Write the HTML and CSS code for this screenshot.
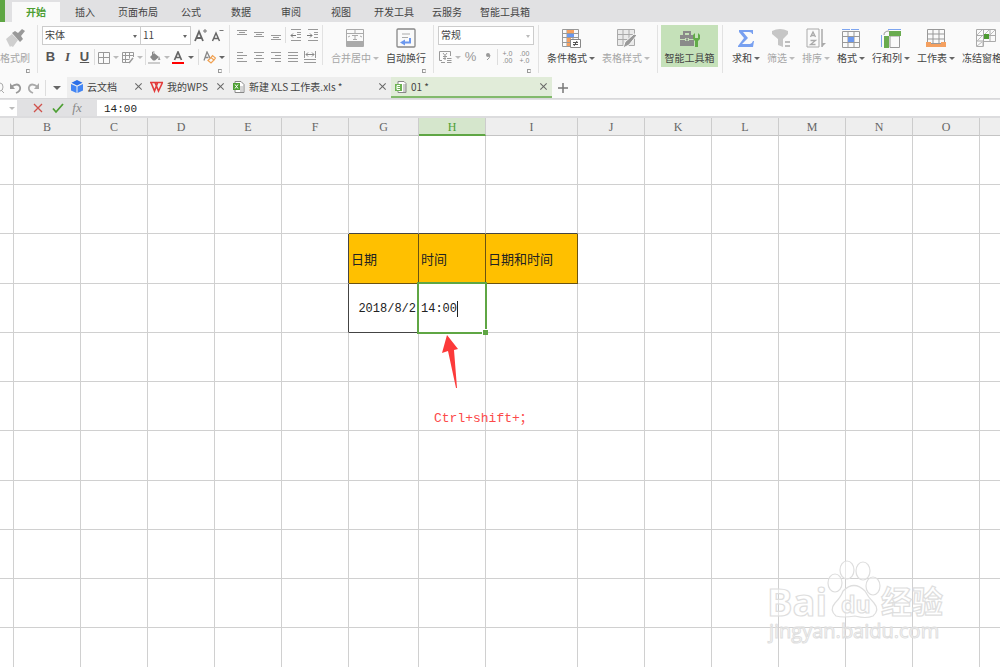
FILE: index.html
```
<!DOCTYPE html>
<html lang="zh-CN">
<head>
<meta charset="utf-8">
<title>01 *</title>
<link rel="stylesheet" href="styles.css">
</head>
<body>
<nav class="menu">
  <button class="app-btn" aria-label="菜单"></button>
  <a class="menu-tab active" href="#">开始</a>
  <a class="menu-tab" href="#">插入</a>
  <a class="menu-tab" href="#">页面布局</a>
  <a class="menu-tab" href="#">公式</a>
  <a class="menu-tab" href="#">数据</a>
  <a class="menu-tab" href="#">审阅</a>
  <a class="menu-tab" href="#">视图</a>
  <a class="menu-tab" href="#">开发工具</a>
  <a class="menu-tab" href="#">云服务</a>
  <a class="menu-tab" href="#">智能工具箱</a>
</nav>

<div class="ribbon">
  <div class="group g-brush">
    <button class="big dim"><svg width="20" height="20" viewBox="0 0 20 20"><path d="M1 11l6-5 6 6-5 7-2-1-1 1z" fill="#cfcfcf"/><path d="M7 5l3-2 3 2 4-4 3 2-4 5 2 3-3 3z" fill="#999"/></svg><span class="lab">格式刷</span></button>
    <i class="launch"></i>
  </div>
  <div class="group g-font">
    <div class="row">
      <label class="drop font-name"><select aria-label="字体"><option>宋体</option></select></label>
      <label class="drop font-size"><select aria-label="字号"><option>11</option></select></label>
      <button class="ib w16 grow-btn" aria-label="增大字号"><svg width="14" height="14" viewBox="0 0 14 14" fill="none" stroke="#666"><path d="M1 13L5 3.500 9 13M2.500 10h5" stroke-width="1.800"/><path d="M9 3h4M11 1v4" stroke="#777"/></svg></button>
      <button class="ib w16" aria-label="减小字号"><svg width="14" height="14" viewBox="0 0 14 14" fill="none" stroke="#666"><path d="M1.500 13L5 5l3.500 8M3 10.500h4" stroke-width="1.500"/><path d="M8.500 2.500h4" stroke="#777"/></svg></button>
    </div>
    <div class="row">
      <button class="ib w16"><b>B</b></button>
      <button class="ib w16"><em>I</em></button>
      <button class="ib w16"><u>U</u></button>
      <i class="sep tight"></i>
      <button class="ib w24 dim" aria-label="边框"><svg width="13" height="13" viewBox="0 0 13 13" fill="none" stroke="#999"><path d="M1.500 1.500h11v11h-11zM6.500 1.500v11M1.500 6.500h11"/></svg><i class="arr"></i></button>
      <button class="ib w24 dim" aria-label="绘图边框"><svg width="13" height="13" viewBox="0 0 13 13" fill="none" stroke="#999"><path d="M8 11.500H1.500v-10h11V6M1.500 4.500h11M1.500 8.500h7M4.500 1.500v10M8.500 1.500v6"/><path d="M8 12l4-5" stroke-width="1.500"/></svg><i class="arr"></i></button>
      <i class="sep tight"></i>
      <button class="ib w24 dim" aria-label="填充颜色"><svg width="13" height="13" viewBox="0 0 13 13"><path d="M2 6l4-4 5 4-4 3.500H5z" fill="#888"/><path d="M4.500 4V1h2" fill="none" stroke="#888"/><path d="M11 5l1.500 4H10z" fill="#999"/><path d="M0 11h12v2H0z" fill="#ccc"/></svg><i class="arr"></i></button>
      <button class="ib w24" aria-label="字体颜色"><svg width="13" height="13" viewBox="0 0 13 13"><path d="M2.500 9L6 1l3.500 8M4 6.500h4" fill="none" stroke="#666" stroke-width="1.700"/><path d="M0 11h12v2H0z" fill="#f00"/></svg><i class="arr"></i></button>
      <i class="sep"></i>
      <button class="ib w24" aria-label="清除"><svg width="13" height="13" viewBox="0 0 13 13" fill="none"><path d="M1 9.500L4 1l3 6M2.500 6.500h3" stroke="#888" stroke-width="1.300"/><path d="M5 9.500l3-3 3 2.500-3 3zM8 6.500l1.500-2 3 2.500L11 9" stroke="#f0a050" stroke-width="1.200"/></svg><i class="arr"></i></button>
    </div>
    <i class="launch"></i>
  </div>
  <div class="group short g-align">
    <div class="row">
      <button class="ib w16" aria-label="顶端对齐"><svg width="12" height="12" viewBox="0 0 12 12" stroke="#999"><path d="M1 1.500h10M3 3.500h6M1 5.500h10"/></svg></button>
      <button class="ib w16" aria-label="垂直居中"><svg width="12" height="12" viewBox="0 0 12 12" stroke="#999"><path d="M1 3.500h10M3 5.500h6M1 7.500h10"/></svg></button>
      <button class="ib w16" aria-label="底端对齐"><svg width="12" height="12" viewBox="0 0 12 12" stroke="#999"><path d="M1 6.500h10M3 8.500h6M1 10.500h10"/></svg></button>
      <i class="sep tight"></i>
      <button class="ib w16" aria-label="减少缩进"><svg width="12" height="12" viewBox="0 0 12 12" stroke="#999" fill="none"><path d="M1 .5h10M7 3.500h4M7 5.500h4M7 8.500h4M1 11.500h10"/><path d="M1 6.500h5M3 4.500l-2 2 2 2" stroke="#777"/></svg></button>
      <button class="ib w16" aria-label="增加缩进"><svg width="12" height="12" viewBox="0 0 12 12" stroke="#999" fill="none"><path d="M1 .5h10M7 3.500h4M7 5.500h4M7 8.500h4M1 11.500h10"/><path d="M0 6.500h5M3 4.500l2 2-2 2" stroke="#777"/></svg></button>
    </div>
    <div class="row">
      <button class="ib w16" aria-label="左对齐"><svg width="12" height="12" viewBox="0 0 12 12" stroke="#999"><path d="M1 1.500h6M1 4.500h10M1 7.500h6M1 10.500h10"/></svg></button>
      <button class="ib w16" aria-label="居中"><svg width="12" height="12" viewBox="0 0 12 12" stroke="#999"><path d="M1 1.500h10M3 4.500h6M1 7.500h10M3 10.500h6"/></svg></button>
      <button class="ib w16" aria-label="右对齐"><svg width="12" height="12" viewBox="0 0 12 12" stroke="#999"><path d="M1 1.500h10M5 4.500h6M1 7.500h10M5 10.500h6"/></svg></button>
      <button class="ib w16" aria-label="两端对齐"><svg width="12" height="12" viewBox="0 0 12 12" stroke="#999"><path d="M1 1.500h10M1 4.500h10M1 7.500h10M1 10.500h10"/></svg></button>
      <button class="ib w16" aria-label="分散对齐"><svg width="12" height="12" viewBox="0 0 12 12" stroke="#999" fill="none"><path d="M.5 0v7M11.500 0v7M0 8.500h12M0 11.500h12"/><path d="M2 3.500h8M4 1.500l-2 2 2 2M8 1.500l2 2-2 2" stroke="#888"/></svg></button>
    </div>
  </div>
  <div class="group g-merge">
    <button class="big dim"><svg width="20" height="20" viewBox="0 0 20 20"><path d="M1.500 1.500h17v17h-17zM1.500 5.500h17M10 1.500v4" fill="none" stroke="#aaa"/><path d="M2 13h16v5H2z" fill="#aaa"/><path d="M7 7.500h6M10 7.500V12M8 11.500h4M3 9l2-1M17 9l-2-1" stroke="#aaa" fill="none"/></svg><span class="lab">合并居中<i class="arr"></i></span></button>
    <button class="big"><svg width="20" height="20" viewBox="0 0 20 20" fill="none"><rect x="1" y="1" width="18" height="18" rx="1" stroke="#888" stroke-width="1.300"/><path d="M6 6h8M6 9.500h6" stroke="#aaa"/><path d="M14 10v4.500H8" stroke="#6c98ee" stroke-width="2"/><path d="M9 11.500v6l-5-3z" fill="#6c98ee"/></svg><span class="lab">自动换行</span></button>
    <i class="launch"></i>
  </div>
  <div class="group g-num">
    <div class="row">
      <label class="drop num-fmt"><select aria-label="数字格式"><option>常规</option></select></label>
    </div>
    <div class="row">
      <button class="ib w24 dim" aria-label="货币"><svg width="13" height="13" viewBox="0 0 13 13" fill="none" stroke="#999"><path d="M3 9.500H.5v-9h11V5M4 2l2 2.500L8 2M6 4.500V9M4 5.500h4M4 7.500h3"/><path d="M8 7.500h4.500M8 9.500h4.500M8 11.500h4.500M2 11.500h4"/></svg><i class="arr"></i></button>
      <button class="ib w16 grey">%</button>
      <button class="ib w16 grey" aria-label="千位分隔"><svg width="8" height="12" viewBox="0 0 8 12"><circle cx="4" cy="4" r="2" fill="#999"/><path d="M6 4q0 3-3 5" stroke="#999" fill="none"/></svg></button>
      <i class="sep tight"></i>
      <button class="ib w16 dec"><span>+.0</span><span>.00</span></button>
      <button class="ib w16 dec"><span>.00</span><span>+.0</span></button>
    </div>
    <i class="launch"></i>
  </div>
  <div class="group g-style">
    <button class="big"><svg width="20" height="20" viewBox="0 0 20 20"><path d="M1.500 1.500h16v17h-16zM1.500 5.500h16M1.500 9.500h16M1.500 14.500h16M6 1.500v17M12 1.500v17" fill="none" stroke="#999"/><path d="M6 2h7v3H6zM6 10h4v4H6z" fill="#f4a060"/><path d="M6 6h7v3H6z" fill="#6c98ee"/><path d="M6 15h3v3H6z" fill="#f4a060"/><path d="M9.500 11.500h10v8h-10z" fill="#fff" stroke="#888"/><path d="M12 14.500h5M12 16.500h5M16 13l-3 5" stroke="#555"/></svg><span class="lab">条件格式<i class="arr"></i></span></button>
    <button class="big dim"><svg width="20" height="20" viewBox="0 0 20 20"><path d="M1.500 1.500h17v16h-17z" fill="#eaeaea" stroke="#aaa"/><path d="M1.500 6.500h17M1.500 11.500h17M7 1.500v16M13 1.500v16" stroke="#aaa"/><path d="M7 20l2-6 9-8 3 1-8 10z" fill="#999" stroke="#fafafa"/></svg><span class="lab">表格样式<i class="arr"></i></span></button>
  </div>
  <div class="group g-tool">
    <button class="big tool"><svg width="20" height="20" viewBox="0 0 20 20"><path d="M4 7V4h6v3" fill="none" stroke="#8a8a8a" stroke-width="2"/><path d="M0 7h14v4H0zM0 12h14v6H0z" fill="#8a8a8a"/><path d="M5 10h4v3H5z" fill="#c5e1b9"/><path d="M6 10.500h2v2H6z" fill="#8a8a8a"/><path d="M15 5v5h3V5l2 2v4l-2 2v6h-3v-6l-2-2V7z" fill="#62ac48"/></svg><span class="lab">智能工具箱</span></button>
  </div>
  <div class="group g-data">
    <button class="big"><svg width="20" height="20" viewBox="0 0 20 20"><path d="M3 2h14v4h-1q0-2-3-2H7l5 6-6 6h8q2 0 3-3h1l-1 6H2v-1l6-8-5-6z" fill="#78a0f0"/></svg><span class="lab">求和<i class="arr"></i></span></button>
    <button class="big dim"><svg width="20" height="20" viewBox="0 0 20 20"><path d="M1 3q8-4 16 0v3l-5 5v8l-5-2v-6L1 6z" fill="#c6c6c6"/><path d="M14 14h5M14 18h5" stroke="#aaa" stroke-width="1.500"/></svg><span class="lab">筛选<i class="arr"></i></span></button>
    <button class="big dim"><svg width="20" height="20" viewBox="0 0 20 20" fill="none" stroke="#aaa"><path d="M1 1h12v18H1z"/><path d="M4.500 9L7 4l2.500 5M5.500 7.500h3M4.500 12.500h5l-5 4h5" stroke-width="1.300"/><path d="M16 1v18" stroke-width="1.500"/><path d="M16 19l4-4h-4z" fill="#aaa" stroke="none"/></svg><span class="lab">排序<i class="arr"></i></span></button>
    <button class="big"><svg width="20" height="20" viewBox="0 0 20 20"><path d="M1.500 3.500h17v16h-17zM1.500 8.500h17M1.500 14.500h17M7 3.500v16M13 3.500v16" fill="none" stroke="#999"/><path d="M7 9h6v5H7z" fill="#6c98ee"/><path d="M1 1.500h18" stroke="#7da5f0" stroke-dasharray="8 1"/></svg><span class="lab">格式<i class="arr"></i></span></button>
    <button class="big"><svg width="20" height="20" viewBox="0 0 20 20"><path d="M9 8h9.500v11.500H9zM3 7q0-4 5-4" fill="none" stroke="#999"/><path d="M8 3h12v5H8zM3 8h5v12H3z" fill="#6aac50"/><path d="M7 1.500h13M.5 7v12" stroke="#7da5f0"/></svg><span class="lab">行和列<i class="arr"></i></span></button>
    <button class="big"><svg width="20" height="20" viewBox="0 0 20 20"><path d="M1.500 1.500h17v14h-17zM1.500 6h17M1.500 11h17M7 1.500v14M13 1.500v14" fill="none" stroke="#999"/><path d="M0 14h5v2h10v-2h5v5H0z" fill="#f4a060"/></svg><span class="lab">工作表<i class="arr"></i></span></button>
    <button class="big"><svg width="20" height="20" viewBox="0 0 20 20"><path d="M.5 1.500h19v12H7v5H.5zM.5 7.500h19M.5 13h7M7.500 1.500v17M14 1.500v12" fill="none" stroke="#aaa"/><path d="M1 7l5-5M8 7l5-5M14 7l5-5M1 13l5-5M1 18l5-4" stroke="#bbb"/><path d="M8 6h5v5H8z" fill="#4c9a30"/></svg><span class="lab">冻结窗格<i class="arr"></i></span></button>
  </div>
</div>

<div class="docs">
  <div class="quick">
    <button class="ib" aria-label="打印预览"><svg width="4" height="13" viewBox="0 0 4 13" fill="none" stroke="#aaa"><path d="M0 2q3 0 3 4t-3 4M1 9l3 3"/></svg></button>
    <button class="ib" aria-label="撤销"><svg width="13" height="13" viewBox="0 0 13 13" fill="none" stroke="#999" stroke-width="1.800"><path d="M2 6q7-5 9 0 1 4-4 6"/><path d="M1 2v6h5z" fill="#999" stroke="none"/></svg></button>
    <button class="ib" aria-label="恢复"><svg width="13" height="13" viewBox="0 0 13 13" fill="none" stroke="#aaa" stroke-width="1.800"><path d="M11 6Q4 1 2 6q-1 4 4 6"/><path d="M12 2v6H7z" fill="#aaa" stroke="none"/></svg></button>
    <i class="sep"></i>
    <button class="ib more" aria-label="更多"><i class="arr large"></i></button>
  </div>
  <div class="doc cloud"><svg width="14" height="14" viewBox="0 0 14 14"><path d="M7 0l5.500 2.700L7 5.500 1.500 2.700z" fill="#2b6fe8"/><path d="M1 4l5.500 2.500V13L1 10.500zM13 4L7.500 6.500V13l5.500-2.500z" fill="#4285f4"/></svg><span>云文档</span><button class="x" aria-label="关闭"></button></div>
  <div class="doc wps"><svg width="14" height="14" viewBox="0 0 14 14" fill="none" stroke="#e33b3b" stroke-width="1.600"><path d="M0 2.500h13M1 2.500L4.500 11l3-8M5 2.500L8.500 11l4-8.500"/></svg><span>我的WPS</span><button class="x" aria-label="关闭"></button></div>
  <div class="doc xls"><svg width="14" height="14" viewBox="0 0 14 14"><path d="M3 1.500h6l3 3v8H3z" fill="#fff" stroke="#888"/><path d="M8 7h3M8 9h3M8 11h3" stroke="#aaa"/><path d="M1 3h7v7H1z" fill="#4e9f34"/><path d="M3 4.500l3 4M6 4.500l-3 4" stroke="#fff"/></svg><span>新建 XLS 工作表.xls *</span><button class="x" aria-label="关闭"></button></div>
  <div class="doc current"><svg width="14" height="14" viewBox="0 0 14 14"><path d="M4 1.500h6l2 2v9H4z" fill="#fff" stroke="#888"/><path d="M9 5h3M9 7h3M9 9h3M9 11h3" stroke="#999"/><path d="M1 4h7v7H1z" fill="#6db353"/><path d="M6 5.500H3v4h3M3 7.500h3" stroke="#fff" fill="none"/></svg><span>01 *</span><button class="x" aria-label="关闭"></button></div>
  <button class="ib plus" aria-label="新建"><svg width="12" height="12" viewBox="0 0 12 12" stroke="#777" stroke-width="1.500"><path d="M1 6h10M6 1v10"/></svg></button>
</div>

<div class="formula">
  <div class="namebox"><i class="arr dimarr"></i></div>
  <div class="fbtns">
    <button class="ib" aria-label="取消"><svg width="12" height="12" viewBox="0 0 12 12" stroke="#d0514b" stroke-width="1.300"><path d="M2 2l8 8M10 2l-8 8"/></svg></button>
    <button class="ib" aria-label="输入"><svg width="12" height="12" viewBox="0 0 12 12" fill="none" stroke="#4e9f34" stroke-width="1.800"><path d="M1 6.500l3 3.500 7-8"/></svg></button>
    <button class="ib fx">fx</button>
  </div>
  <input class="finput" aria-label="编辑栏" value="14:00">
</div>

<main class="sheet">
  <table class="grid">
    <colgroup><col class="c-edge"><col span="5"><col class="c-g"><col><col class="c-i"><col span="7"></colgroup>
    <thead><tr><th></th><th>B</th><th>C</th><th>D</th><th>E</th><th>F</th><th>G</th><th class="sel">H</th><th>I</th><th>J</th><th>K</th><th>L</th><th>M</th><th>N</th><th>O</th><th></th></tr></thead>
    <tbody>
      <tr><td></td><td></td><td></td><td></td><td></td><td></td><td></td><td></td><td></td><td></td><td></td><td></td><td></td><td></td><td></td><td></td></tr>
      <tr><td></td><td></td><td></td><td></td><td></td><td></td><td class="kb"></td><td class="kb"></td><td class="kb"></td><td></td><td></td><td></td><td></td><td></td><td></td><td></td></tr>
      <tr class="tall"><td></td><td></td><td></td><td></td><td></td><td class="kr"></td><td class="head">日期</td><td class="head">时间</td><td class="head">日期和时间</td><td></td><td></td><td></td><td></td><td></td><td></td><td></td></tr>
      <tr><td></td><td></td><td></td><td></td><td></td><td class="kr"></td><td class="kb date">2018/8/2</td><td class="editing">14:00<i class="caret"></i></td><td></td><td></td><td></td><td></td><td></td><td></td><td></td><td></td></tr>
      <tr><td></td><td></td><td></td><td></td><td></td><td></td><td></td><td></td><td></td><td></td><td></td><td></td><td></td><td></td><td></td><td></td></tr>
      <tr><td></td><td></td><td></td><td></td><td></td><td></td><td></td><td></td><td></td><td></td><td></td><td></td><td></td><td></td><td></td><td></td></tr>
      <tr class="tall"><td></td><td></td><td></td><td></td><td></td><td></td><td></td><td></td><td></td><td></td><td></td><td></td><td></td><td></td><td></td><td></td></tr>
      <tr><td></td><td></td><td></td><td></td><td></td><td></td><td></td><td></td><td></td><td></td><td></td><td></td><td></td><td></td><td></td><td></td></tr>
      <tr><td></td><td></td><td></td><td></td><td></td><td></td><td></td><td></td><td></td><td></td><td></td><td></td><td></td><td></td><td></td><td></td></tr>
      <tr><td></td><td></td><td></td><td></td><td></td><td></td><td></td><td></td><td></td><td></td><td></td><td></td><td></td><td></td><td></td><td></td></tr>
      <tr><td></td><td></td><td></td><td></td><td></td><td></td><td></td><td></td><td></td><td></td><td></td><td></td><td></td><td></td><td></td><td></td></tr>
    </tbody>
  </table>
  <svg class="pointer" width="18" height="54" viewBox="0 0 18 54"><path d="M5 0l11 14-4 1 3 38h-1L6 16l-6 2z" fill="#fc3a3a"/></svg>
  <p class="note">Ctrl+shift+；</p>
  <svg class="mark" width="184" height="90" viewBox="0 0 184 90">
    <g fill="#fff" stroke="#dedede" stroke-width="1.200" fill-opacity=".5">
      <text x="1" y="58" font-size="38" class="mark-b">Bai</text>
      <ellipse cx="69" cy="25" rx="7" ry="9"/><ellipse cx="81" cy="12" rx="7" ry="9"/><ellipse cx="97" cy="13" rx="7" ry="9"/><ellipse cx="107" cy="28" rx="7" ry="9"/>
      <path d="M77 33q11-11 22 0 3 6 9 12 6 7-1 13-7 3-18 0-12 2-19 0-7-6-1-13 6-6 8-12z"/>
      <text x="75" y="55" font-size="23" class="mark-b">du</text>
      <text x="115" y="55" font-size="31" class="mark-c">经验</text>
      <text x="3" y="80" font-size="20" class="mark-r" stroke-width="1">jingyan.baidu.com</text>
    </g>
  </svg>
</main>
</body>
</html>
```

FILE: styles.css
```
* { box-sizing: border-box; }
body {
  margin: 0;
  height: 100vh;
  overflow: hidden;
  display: flex;
  flex-direction: column;
  background: #fff;
  color: #444;
  font: 10px/12px "Noto Sans CJK SC", sans-serif;
}
button { border: 0; padding: 0; background: none; color: inherit; font: inherit; }
i { font-style: normal; }
svg { display: block; flex: none; }

/* menu */
.menu { display: flex; flex: none; height: 22px; align-items: flex-end; background: #e1e1e3; }
.app-btn { width: 5px; height: 22px; margin-right: 7px; background: #5fa644; }
.menu-tab {
  min-width: 50px;
  height: 20px;
  padding: 0 8px;
  line-height: 20px;
  text-align: center;
  white-space: nowrap;
  color: #444;
  text-decoration: none;
}
.menu-tab.active { min-width: 48px; background: #fafafa; color: #4e9f34; font-weight: 700; }

/* ribbon */
.ribbon { display: flex; flex: none; height: 55px; padding-top: 3px; overflow: hidden; background: #fafafa; }
.group { position: relative; flex: none; height: 48px; border-right: 1px solid #e2e2e2; }
.group.short { height: 40px; }
.launch {
  position: absolute;
  right: 7px;
  bottom: 0;
  width: 4px;
  height: 4px;
  border: 1px solid #999;
  border-right-color: #ccc;
}
.row { display: flex; align-items: center; height: 20px; }
.row + .row { height: 24px; }
.g-brush { width: 38px; }
.g-font { width: 192px; padding-left: 4px; }
.g-align { width: 93px; padding-left: 3px; }
.g-merge { width: 111px; padding-left: 8px; display: flex; gap: 7px; align-items: flex-start; }
.g-num { width: 105px; padding-left: 4px; }
.g-style { width: 119px; padding-left: 8px; display: flex; gap: 7px; align-items: flex-start; }
.g-tool { width: 65px; padding-left: 3px; }
.g-data { display: flex; gap: 7px; padding-left: 9px; align-items: flex-start; border: 0; }

.big { display: flex; flex: none; flex-direction: column; align-items: center; gap: 3px; padding-top: 3px; height: 42px; }
.lab { display: flex; align-items: center; gap: 2px; line-height: 14px; white-space: nowrap; }
.dim { color: #a6a6a6; }
.tool { width: 57px; background: #c5e1b9; }
.arr {
  width: 6px;
  border: 3px solid transparent;
  border-top-color: #666;
  border-bottom-width: 0;
}
.dim .arr, .dimarr { border-top-color: #bbb; }
.large { width: 8px; border-width: 4px 4px 0; }

.ib { display: flex; flex: none; align-items: center; justify-content: center; }
.w16 { width: 17px; height: 18px; }
.w24 { width: 24px; height: 18px; gap: 3px; }
.sep { flex: none; width: 1px; height: 16px; margin: 0 3px; background: #ddd; }
.sep.tight { margin: 0 1px; }
.ib b, .ib em, .ib u { font: 700 13px/16px "Liberation Sans", sans-serif; color: #555; }
.ib em { font: italic 700 13px/16px "Liberation Serif", serif; }
.grow-btn { margin-left: 1px; }
.grey { font: 13px/16px "Liberation Sans", sans-serif; color: #999; }
.dec { flex-direction: column; font: 7px/7px "Liberation Sans", sans-serif; color: #888; }

.drop { position: relative; display: flex; border: 1px solid #ccc; height: 19px; background: #fff; }
.drop::after {
  content: "";
  position: absolute;
  right: 3px;
  top: 8px;
  border: 2px solid transparent;
  border-top: 3px solid #666;
  border-bottom: 0;
}
.drop select {
  width: 100%;
  border: 0;
  padding: 0 2px;
  appearance: none;
  background: none;
  color: #444;
  font: 10px/16px "Noto Sans CJK SC", sans-serif;
}
.font-name { width: 99px; }
.font-size { width: 50px; border-left: 0; }
.num-fmt { width: 96px; }
.num-fmt::after { border-top-color: #bbb; }

/* document tabs */
.docs { display: flex; flex: none; height: 22px; background: #fafafa; border-bottom: 1px solid #d8d8da; }
.quick { display: flex; width: 67px; align-items: center; gap: 5px; }
.quick .sep { margin: 0; }
.more { padding-left: 2px; }
.doc { display: flex; flex: none; align-items: center; gap: 3px; padding: 0 4px 2px 3px; background: #eee; white-space: nowrap; }
.doc .x { margin-left: auto; }
.cloud { width: 80px; }
.wps { width: 82px; }
.xls { width: 162px; }
.current { width: 161px; background: #e1ecd9; border-bottom: 2px solid #82ba6c; padding-bottom: 0; }
.x { position: relative; width: 9px; height: 9px; }
.x::before, .x::after {
  content: "";
  position: absolute;
  left: 0;
  top: 4px;
  width: 9px;
  height: 1px;
  background: #666;
  transform: rotate(45deg);
}
.x::after { transform: rotate(-45deg); }
.plus { width: 22px; }

/* formula bar */
.formula { display: flex; flex: none; height: 19px; background: #e1e1e3; border-top: 1px solid #e1e1e3; border-bottom: 2px solid #dcdcde; }
.namebox { display: flex; width: 17px; align-items: center; justify-content: flex-end; padding-right: 2px; background: #fff; }
.fbtns { display: flex; width: 80px; align-items: center; justify-content: center; gap: 8px; }
.fx { font: italic 13px/14px "Liberation Serif", serif; color: #888; }
.finput {
  flex: 1;
  min-width: 0;
  border: 0;
  padding: 1px 7px 0;
  outline: 0;
  background: #fff;
  color: #222;
  font: 11px/16px "Liberation Mono", monospace;
}

/* sheet */
.sheet { position: relative; flex: 1; min-height: 0; overflow: hidden; }
.grid { width: 1047px; table-layout: fixed; border-collapse: separate; border-spacing: 0; }
col { width: 67px; }
.c-edge { width: 14px; }
.c-g { width: 70px; }
.c-i { width: 92px; }
th {
  height: 18px;
  padding: 2px 0 0;
  background: #eee;
  border-right: 1px solid #ccc;
  border-bottom: 1px solid #c4c4c4;
  font: 12px/15px "Liberation Serif", serif;
  color: #666;
}
th.sel { background: #d5e6cc; color: #4e9f34; border-bottom: 2px solid #5fa644; line-height: 14px; }
td {
  height: 49px;
  padding: 2px 2px 0;
  border-right: 1px solid #d0d0d0;
  border-bottom: 1px solid #d0d0d0;
  white-space: nowrap;
  color: #222;
  font: 12px/16px "Liberation Mono", monospace;
}
.tall td { height: 50px; }
td.kr { border-right-color: #444; }
td.kb { border-bottom-color: #444; }
td.head {
  padding-top: 0;
  background: #ffc000;
  border-color: #6b5310;
  font: 13px/20px "Noto Sans CJK SC", sans-serif;
}
td.date { text-align: right; }
td.editing { position: relative; }
.editing::before {
  content: "";
  position: absolute;
  inset: -2px;
  border: 2px solid #5fa644;
}
.editing::after {
  content: "";
  position: absolute;
  right: -3px;
  bottom: -3px;
  width: 5px;
  height: 5px;
  background: #5fa644;
  border: solid #fff;
  border-width: 1px 0 0 1px;
}
.caret { display: inline-block; width: 1px; height: 16px; background: #222; vertical-align: middle; }
.pointer { position: absolute; left: 442px; top: 217px; }
.note {
  position: absolute;
  left: 434px;
  top: 291px;
  margin: 0;
  color: #fc4a4a;
  font: 13px/20px "Liberation Mono", "Noto Sans CJK SC", monospace;
}
.mark { position: absolute; right: 50px; bottom: 19px; }
.mark-b { font-family: "Open Sans", sans-serif; font-weight: 700; }
.mark-r { font-family: "Open Sans", sans-serif; }
.mark-c { font-family: "Noto Sans CJK SC", sans-serif; font-weight: 700; }
```
